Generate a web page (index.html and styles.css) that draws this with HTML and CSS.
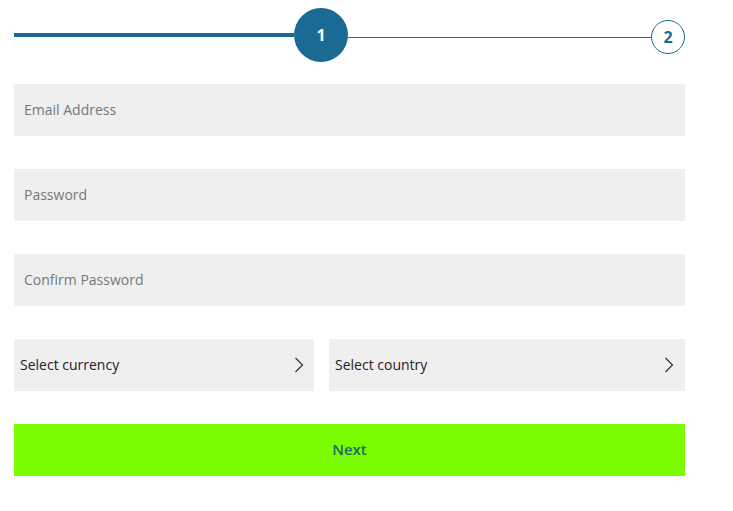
FILE: index.html
```html
<!DOCTYPE html>
<html lang="en">
<head>
<meta charset="utf-8">
<title>Sign up</title>
<link rel="stylesheet" href="styles.css">
</head>
<body>
<div class="page">
  <div class="stepper">
    <div class="line-done"></div>
    <div class="step step-active">1</div>
    <div class="line-todo"></div>
    <div class="step step-next">2</div>
  </div>
  <form class="form">
    <div class="field"><span class="placeholder">Email Address</span></div>
    <div class="field"><span class="placeholder">Password</span></div>
    <div class="field"><span class="placeholder">Confirm Password</span></div>
    <div class="selects">
      <div class="select select-currency">
        <span class="select-label">Select currency</span>
        <svg class="chev" width="10" height="16" viewBox="0 0 10 16"><path d="M1.5 1 L8.5 8 L1.5 15" fill="none" stroke="#333" stroke-width="1.2"/></svg>
      </div>
      <div class="select select-country">
        <span class="select-label">Select country</span>
        <svg class="chev" width="10" height="16" viewBox="0 0 10 16"><path d="M1.5 1 L8.5 8 L1.5 15" fill="none" stroke="#333" stroke-width="1.2"/></svg>
      </div>
    </div>
    <div class="btn-next">Next</div>
  </form>
</div>
</body>
</html>
```
FILE: styles.css
```css
html, body {
  margin: 0;
  padding: 0;
  background: #ffffff;
  font-family: "Open Sans", Lato, sans-serif;
}
.page {
  width: 671px;
  padding: 0 0 0 14px;
}
.stepper {
  display: flex;
  align-items: center;
  height: 54px;
  margin-top: 8px;
}
.line-done {
  width: 280px;
  height: 4px;
  background: #1b6a93;
}
.step {
  display: flex;
  align-items: center;
  justify-content: center;
  border-radius: 50%;
  box-sizing: border-box;
  font-weight: 700;
}
.step-active {
  width: 54px;
  height: 54px;
  background: #1b6a93;
  color: #ffffff;
  font-size: 16px;
}
.line-todo {
  flex: 1;
  height: 1px;
  background: #1b6a93;
  margin-top: 4px;
}
.step-next {
  width: 34px;
  height: 34px;
  border: 1px solid #1b6a93;
  color: #1b6a93;
  font-size: 16px;
  margin-top: 4px;
}
.form {
  display: flex;
  flex-direction: column;
  gap: 33px;
  margin-top: 22px;
}
.field {
  height: 52px;
  background: #efefef;
  display: flex;
  align-items: center;
  padding-left: 10px;
  padding-bottom: 2px;
  box-sizing: border-box;
}
.placeholder {
  font-size: 14px;
  color: #777777;
}
.selects {
  display: flex;
  gap: 15px;
}
.select {
  height: 52px;
  background: #efefef;
  display: flex;
  align-items: center;
  justify-content: space-between;
  padding-left: 6px;
  box-sizing: border-box;
}
.select-currency {
  width: 300px;
  padding-right: 10px;
}
.select-country {
  flex: 1;
  padding-right: 11px;
}
.select-label {
  font-size: 14px;
  color: #222222;
  margin-bottom: 2px;
}
.chev {
  display: block;
}
.btn-next {
  height: 52px;
  background: #7cfc00;
  display: flex;
  align-items: center;
  justify-content: center;
  font-size: 15px;
  font-weight: 600;
  color: #1e6b6e;
  padding-bottom: 3px;
  box-sizing: border-box;
}
```
